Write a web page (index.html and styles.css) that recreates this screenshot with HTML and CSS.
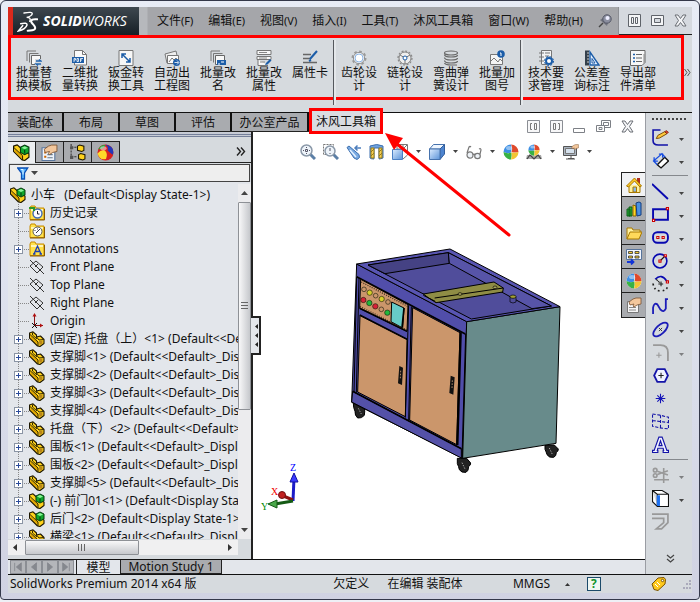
FILE: index.html
```html
<!DOCTYPE html>
<html lang="zh-CN">
<head>
<meta charset="utf-8">
<title>SOLIDWORKS</title>
<link rel="stylesheet" href="styles.css">
</head>
<body>
<svg class="defs" aria-hidden="true">
  <defs>
    <linearGradient id="gb" x1="0" y1="0" x2="1" y2="1"><stop offset="0" stop-color="#dcecff"/><stop offset="1" stop-color="#5a92d8"/></linearGradient>
    <symbol id="part" viewBox="0 0 16 16">
      <path d="M.5 2 4 .8 7.500 4v2l4-1L15 8.500v4L11 15.500 8.500 15 .5 7z" fill="#ffd21c" stroke="#1c1600" stroke-width="1.100" stroke-linejoin="round"/>
      <path d="M1.500 4.500 9 11.500v2.500L1.500 7z" fill="#e0a400"/>
      <path d="M1 3.500 9 11v4M3.500 1.500v2.500L8 8M7.500 6 10 9l4.500-.5" fill="none" stroke="#1c1600" stroke-width=".9"/>
      <path d="m10 10 3.500-.5v3L10.500 14z" fill="#b8861a"/>
    </symbol>
    <symbol id="asm" viewBox="0 0 16 16">
      <path d="M.5 2 4 .8 7.500 4v2l7.500 3v3.500L11 15.500 8.500 15 .5 7z" fill="#ffd21c" stroke="#1c1600" stroke-width="1.100" stroke-linejoin="round"/>
      <path d="M1.500 4.500 9 11.500v2.500L1.500 7z" fill="#e0a400"/>
      <path d="M1 3.500 9 11v4" fill="none" stroke="#1c1600" stroke-width=".9"/>
      <path d="m7 3 4-2 4 2v5l-4 2-4-2z" fill="#10a62c" stroke="#06380f"/>
      <path d="m8 3.500 3-1.500 3 1.500-3 1.500z" fill="#8cf49a"/>
      <path d="M11 5.500V9" stroke="#06380f"/>
    </symbol>
    <symbol id="folder" viewBox="0 0 16 16"><path d="M1 14.500V3l1-2h4l1 2h8v11.500z" fill="#ffe14a" stroke="#c78b00"/><path d="M2 4h12v2H2z" fill="#fff6b8"/><path d="M1 15h14.500V4" fill="none" stroke="#8a5a00"/></symbol>
    <symbol id="plane" viewBox="0 0 16 16"><path d="m1 7 6-5 7 6-6 6zM1 1l14 14M6 8l3-3" fill="none" stroke="#333" stroke-width="1"/></symbol>
    <symbol id="ball" viewBox="0 0 16 16"><circle cx="8" cy="8" r="7.500" fill="#fff"/><path d="M8 .5A7.500 7.500 0 0 0 .5 8Q4 10 8 8.500 9 4 8 .5z" fill="#3c8fe4"/><path d="M8 .5Q10 4 8.500 8q3.500 1 7 0A7.500 7.500 0 0 0 8 .5z" fill="#e04a2c"/><path d="M.5 8A7.500 7.500 0 0 0 8 15.500Q9 12 8.500 8.500 4 10 .5 8z" fill="#38b244"/><path d="M15.500 8A7.500 7.500 0 0 1 8 15.500Q9.500 12 8.500 8.500q3.500 .5 7-.5z" fill="#f3c534"/><ellipse cx="6" cy="4" rx="3" ry="2" fill="#fff" opacity=".45"/></symbol>
    <symbol id="hand" viewBox="0 0 16 16"><path d="M3 5 7 2l3-1h5v6l-4 1-3 2-1-1 1-2-4 1z" fill="#f3c79c" stroke="#7a5230" stroke-width=".8"/></symbol>
    <symbol id="pages" viewBox="0 0 16 16"><path d="M1 11V1h9M3.500 12.500V3.500h9" fill="none" stroke="#777"/><path d="M5.500 5.500h9v9h-9z" fill="#f8f8f8" stroke="#666"/></symbol>
    <symbol id="close" viewBox="0 0 13 13"><path d="M1 1h3l2.500 3.500L9 1h3L8.500 6.500 12 12H9L6.500 8.500 4 12H1l3.500-5.500z" fill="#f4f5f7" stroke="#6a6e75"/></symbol>
    <symbol id="tri" viewBox="0 0 7 4"><path d="M1 0h5L3.500 3z" fill="#444"/></symbol>
  </defs>
</svg>
<div class="window">
  <header class="titlebar">
    <div class="brand">
      <svg class="ds" viewBox="0 0 63 63" aria-hidden="true"><g fill="none" stroke="#fff" stroke-linecap="round"><path d="M21 6q25-5 25 2-2 8-17 11 15 0 9 12" stroke-width="4"/><path d="M11 38q20-4 19 4-4 13-26 18l13-16" stroke-width="4.500"/><path d="M61 25q-16-2-19 5 0 4 9 13 6 8 2 12-5 4-21 4" stroke-width="6"/></g></svg>
      <span class="word"><b>SOLID</b>WORKS</span>
    </div>
    <nav class="menu">
      <button>文件<span>(F)</span></button>
      <button>编辑<span>(E)</span></button>
      <button>视图<span>(V)</span></button>
      <button>插入<span>(I)</span></button>
      <button>工具<span>(T)</span></button>
      <button>沐风工具箱</button>
      <button>窗口<span>(W)</span></button>
      <button>帮助<span>(H)</span></button>
      <button aria-label="固定"><svg width="14" height="14" viewBox="0 0 14 14"><path d="m1 13 4-4" stroke="#444" stroke-width="1.500"/><path d="m2 6 7 6 1-3-5-5z" fill="#71747f"/><circle cx="9" cy="5" r="4.200" fill="#8b8fa0" stroke="#555866"/><circle cx="9.500" cy="4" r="2" fill="#eef"/></svg></button>
    </nav>
    <div class="winbtns">
      <button aria-label="平铺"><svg width="13" height="13" viewBox="0 0 13 13"><path d="M.5.5h12v12H.5z" fill="#f4f5f7" stroke="#5f636a"/><path d="M3.500 3.500h2v6h-2zM7.500 3.500h2v6h-2z" fill="none" stroke="#5f636a"/></svg></button>
      <button aria-label="最大化"><svg width="13" height="13" viewBox="0 0 13 13"><path d="M.5 1.500h12v10H.5z" fill="#f4f5f7" stroke="#5f636a"/><path d="M3.500 4.500h6v4h-6z" fill="#d5d9df" stroke="#5f636a"/></svg></button>
      <button aria-label="关闭"><svg width="13" height="13"><use href="#close"/></svg></button>
    </div>
  </header>

  <section class="ribbon">
    <div class="tools">
      <button><svg viewBox="0 0 16 16"><use href="#pages"/><path d="M9 9h7v7H9z" fill="#d5d9de"/><path d="M10 11h5l-2-1.500M15 14h-5l2 1.500" stroke="#2467b0" fill="none" stroke-width="1.300"/></svg>批量替换模板</button>
      <button><svg viewBox="0 0 16 16"><path d="M2.500 15V.5h8l4 4V15z" fill="#fafafa" stroke="#777"/><path d="M10.500.5v4h4" fill="none" stroke="#777"/><path d="M0 7h12v6H0z" fill="#1c5da8"/><path d="M2 12V8.500h1.500v1.500H2M5 8.500v3h1.500v-3zM8.500 12V8.500H11M8.500 10H10" fill="none" stroke="#fff" stroke-width=".8"/></svg>二维批量转换</button>
      <button><svg viewBox="0 0 16 16"><path d="M1 .5h14v15H1z" fill="#f7f7f7" stroke="#777"/><path d="m4 4 8 8M4 8V4h4M8 12h4V8" fill="none" stroke="#1c5da8" stroke-width="1.500"/></svg>钣金转换工具</button>
      <button><svg viewBox="0 0 16 16"><path d="m1 4 11-3 2 9-11 3z" fill="#eee" stroke="#777"/><path d="M3.500 5.500h11v8h-11z" fill="#fafafa" stroke="#777"/><path d="m5 12 3-4 2 2 2-2 2 3" fill="none" stroke="#777"/><circle cx="12.500" cy="12.500" r="3.500" fill="#1c5da8"/><path d="M10.500 12.500h4m-1.500-2 2 2-2 2" stroke="#fff" fill="none" stroke-width=".8"/></svg>自动出工程图</button>
      <button><svg viewBox="0 0 16 16"><use href="#pages"/><path d="M7 10h9v5H7z" fill="#1c5da8"/><path d="M8 14h2M11 12h3" stroke="#fff"/></svg>批量改名</button>
      <button><svg viewBox="0 0 16 16"><path d="M1 .5h14v4H1zM1 6.500h14v3H1zM2 9.500v6h10" fill="#f7f7f7" stroke="#777"/><path d="M3 2.500h8M3 8h8M4 12h5" stroke="#888"/><path d="m9 15 1-2 4-4 1.500 1.500-4 4z" fill="#1c5da8"/></svg>批量改属性</button>
      <button><svg viewBox="0 0 16 16"><path d="M1 4.500h8M1 8.500h7M1 12.500h14" stroke="#666" stroke-width="1.300"/><path d="m8 9 7-8M7 11l2-1" stroke="#1c5da8" stroke-width="2"/></svg>属性卡</button>
      <span class="sep"></span>
      <button><svg viewBox="0 0 16 16"><circle cx="8" cy="8" r="6.600" fill="none" stroke="#999" stroke-width="1.800" stroke-dasharray="2.600 2.580"/><circle cx="8" cy="8" r="5.600" fill="#f6f9ff" stroke="#888" stroke-width=".9"/><circle cx="8" cy="8" r="4" fill="#fff" stroke="#8bb4e4"/></svg>齿轮设计</button>
      <button><svg viewBox="0 0 16 16"><circle cx="8" cy="8" r="7" fill="none" stroke="#888" stroke-width="1.200" stroke-dasharray="2 1.660"/><circle cx="8" cy="8" r="6" fill="#eee" stroke="#777" stroke-width=".9"/><path d="M8 8v6M8 8 3 5m5 3 5-3" stroke="#777" fill="none"/><circle cx="8" cy="8" r="2" fill="#fff" stroke="#1c5da8"/></svg>链轮设计</button>
      <button><svg viewBox="0 0 16 16"><g fill="none" stroke="#666" stroke-width="1.200"><ellipse cx="8" cy="3" rx="6.500" ry="2"/><path d="M1.500 4.500q0 2.500 6.500 2.500t6.500-2M1.500 7.500Q1.500 10 8 10t6.500-2M1.500 10.500Q1.500 13 8 13t6.500-2M1.500 13q1 2 6.500 2h6"/></g></svg>弯曲弹簧设计</button>
      <button><svg viewBox="0 0 16 16"><path d="M1.500 4.500h12v10h-12z" fill="#f4f4f4" stroke="#777"/><path d="m2 11 3-3 4 4 2-3 2 2" fill="none" stroke="#777"/><circle cx="12" cy="4" r="3.800" fill="#1c5da8"/><path d="M11 3h1v3" stroke="#fff" fill="none"/></svg>批量加图号</button>
      <span class="sep"></span>
      <button><svg viewBox="0 0 16 16"><path d="M3.500 14.500V.5h10v9M4 14.500h5" fill="#f4f4f4" stroke="#777"/><path d="M1 3h5M1 7h5M1 11h5M7 3h5M7 6h4" stroke="#777"/><circle cx="11" cy="11" r="3" fill="#fff" stroke="#1c5da8" stroke-width="2"/><circle cx="11" cy="11" r="4.500" fill="none" stroke="#1c5da8" stroke-dasharray="2 1.530"/></svg>技术要求管理</button>
      <button><svg viewBox="0 0 16 16"><path d="M1 .5h4v15H1z" fill="#34404c"/><path d="M3 3h2M3 6h2M3 9h2M3 12h2" stroke="#ccc"/><path d="M6 2v13h9z" fill="#e6f0ff" stroke="#1c5da8" stroke-width="1.400"/><path d="M8 8.500V13h3z" fill="#fff" stroke="#1c5da8"/></svg>公差查询标注</button>
      <button><svg viewBox="0 0 16 16"><path d="M3 .5h12v12l-3 3H.5V.5z" fill="#f7f7f7" stroke="#666"/><path d="M3 4.500h2M3 8h2M3 11.500h2" stroke="#1c5da8" stroke-width="1.500"/><path d="M6 4.500h6M6 8h6M6 11.500h6" stroke="#666"/><path d="M14 4v9" stroke="#888"/></svg>导出部件清单</button>
    </div>
    <button class="more" aria-label="更多工具"><svg width="7" height="9" viewBox="0 0 7 9"><path d="m.5 1 2.500 3.500L.5 8M3.500 1 6 4.500 3.500 8" fill="none" stroke="#555"/></svg></button>
  </section>

  <main class="workspace">
    <div class="doc">
      <div class="tabrow">
        <nav class="tabs">
          <button>装配体</button><button>布局</button><button>草图</button><button>评估</button><button class="wide">办公室产品</button><button class="active">沐风工具箱</button>
        </nav>
        <div class="docbtns">
          <button aria-label="左侧"><svg width="13" height="13" viewBox="0 0 13 13"><path d="M.5.5h12v12H.5z" fill="#f7f7f8" stroke="#8b8e94"/><path d="M5 3.500H3.500v6H5M7.500 3.500h2v6h-2z" fill="none" stroke="#777"/></svg></button>
          <button aria-label="右侧"><svg width="13" height="13" viewBox="0 0 13 13"><path d="M.5.500h12v12H.5z" fill="#f7f7f8" stroke="#8b8e94"/><path d="M3.500 3.500h2v6h-2zM8 3.500h1.500v6H8" fill="none" stroke="#777"/></svg></button>
          <button aria-label="最小化"><svg width="13" height="13" viewBox="0 0 13 13"><path d="M.5 8.500h11v4H.5z" fill="#fff" stroke="#7d8086"/></svg></button>
          <button aria-label="还原"><svg width="15" height="13" viewBox="0 0 15 13"><path d="M5.500.5h9v7h-9z" fill="#fff" stroke="#7d8086"/><path d="M7.500 2.500h5v3h-5z" fill="none" stroke="#7d8086"/><path d="M.5 5.500h8v6h-8z" fill="#fff" stroke="#7d8086"/><path d="M3 7.500h3v2H3z" fill="none" stroke="#7d8086"/></svg></button>
          <button aria-label="关闭文档"><svg width="13" height="13"><use href="#close"/></svg></button>
        </div>
      </div>

      <div class="split">
        <aside class="panel">
          <div class="ptabs">
            <button class="on" aria-label="设计树"><svg width="17" height="17"><use href="#asm"/></svg></button>
            <button aria-label="属性"><svg width="17" height="17" viewBox="0 0 16 16"><path d="M1 3.500h12v12H1z" fill="#eef3fb" stroke="#57749c"/><path d="M3 8h2M3 12h2" stroke="#c60" stroke-width="2"/><path d="M6 10h5M6 13h5" stroke="#678"/><use href="#hand"/></svg></button>
            <button aria-label="配置"><svg width="17" height="17" viewBox="0 0 16 16"><path d="M2 0v15M2 3h5M2 12h5" stroke="#333" stroke-dasharray="2 1" fill="none"/><path d="M1 2h3v3H1zM1 11h3v3H1z" fill="#555"/><path d="m8 2 2-1 4 1v4l-2 1-4-1zM9 10l2-1 4 1v4l-2 1-4-1z" fill="#ffd21c" stroke="#1c1600"/></svg></button>
            <button aria-label="外观"><svg width="17" height="17" viewBox="0 0 16 16"><circle cx="8" cy="8" r="7.500" fill="#d82020"/><path d="M.5 9q3-4 7-3 3 3 1 8-6 2-8-5z" fill="#ffd928"/><path d="M8 .5Q11 3 10 6q3 3 5 4 2-8-7-9.500z" fill="#2436b8"/><path d="M1 5q3-5 7-4-1 4-7 4z" fill="#2aa33a"/><ellipse cx="6" cy="4" rx="3" ry="2" fill="#fff" opacity=".5"/></svg></button>
            <button class="expand" aria-label="展开"><svg width="10" height="9" viewBox="0 0 10 9"><path d="m1 .5 3.500 4L1 8.500m4-8 3.500 4L5 8.500" fill="none" stroke="#222" stroke-width="1.400"/></svg></button>
          </div>
          <label class="filter">
            <svg width="22" height="13" viewBox="0 0 22 13"><path d="M.7 1h10L7.500 6v6h-3V6z" fill="#58b6ff" stroke="#0b4fb4" stroke-width="1.300"/><path d="M4 2.500h2v5" stroke="#e6f6ff" fill="none"/><path d="M14 4h7l-3.500 4z" fill="#444"/></svg>
            <input type="text" aria-label="筛选">
          </label>
          <div class="treebox">
            <ul class="tree">
              <li class="root"><svg><use href="#asm"/></svg>小车   (Default&lt;Display State-1&gt;)</li>
              <li><i class="node"><button aria-label="展开"></button></i><svg viewBox="0 0 16 16"><use href="#folder"/><circle cx="8.500" cy="8.500" r="4.500" fill="#fff" stroke="#3f6ab8" stroke-width="1.400"/><path d="M8.500 6v3h2" stroke="#223" fill="none"/><path d="M0 3h5v3" stroke="#2c9a2c" stroke-width="2" fill="none"/></svg>历史记录</li>
              <li><i class="node"></i><svg viewBox="0 0 16 16"><use href="#folder"/><circle cx="8.500" cy="8.500" r="4.500" fill="#fff" stroke="#555"/><path d="m7 10 4-4M6 7v1M8 6h1" stroke="#334"/></svg>Sensors</li>
              <li><i class="node"><button aria-label="展开"></button></i><svg viewBox="0 0 16 16"><use href="#folder"/><path d="m5 13 3.500-8 3.500 8M6.500 10.500h4M4 13h2.500M10.500 13H13" stroke="#1b3fb4" stroke-width="1.300" fill="none"/></svg>Annotations</li>
              <li><i class="node"></i><svg><use href="#plane"/></svg>Front Plane</li>
              <li><i class="node"></i><svg><use href="#plane"/></svg>Top Plane</li>
              <li><i class="node"></i><svg><use href="#plane"/></svg>Right Plane</li>
              <li><i class="node"></i><svg viewBox="0 0 16 16"><path d="M5.500 13V2M5 12.500h9" stroke="#8a1414"/><path d="M3.500 3.500h4L5.500 0zM11 10.500v4l3-2z" fill="#b01010"/><path d="m3 10 5 5m0-5-5 5" stroke="#111"/></svg>Origin</li>
              <li><i class="node"><button aria-label="展开"></button></i><svg><use href="#part"/></svg>(固定) 托盘（上）&lt;1&gt; (Default&lt;&lt;Default&gt;)</li>
              <li><i class="node"><button aria-label="展开"></button></i><svg><use href="#part"/></svg>支撑脚&lt;1&gt; (Default&lt;&lt;Default&gt;_Display State 1&gt;)</li>
              <li><i class="node"><button aria-label="展开"></button></i><svg><use href="#part"/></svg>支撑脚&lt;2&gt; (Default&lt;&lt;Default&gt;_Display State 1&gt;)</li>
              <li><i class="node"><button aria-label="展开"></button></i><svg><use href="#part"/></svg>支撑脚&lt;3&gt; (Default&lt;&lt;Default&gt;_Display State 1&gt;)</li>
              <li><i class="node"><button aria-label="展开"></button></i><svg><use href="#part"/></svg>支撑脚&lt;4&gt; (Default&lt;&lt;Default&gt;_Display State 1&gt;)</li>
              <li><i class="node"><button aria-label="展开"></button></i><svg><use href="#part"/></svg>托盘（下）&lt;2&gt; (Default&lt;&lt;Default&gt;)</li>
              <li><i class="node"><button aria-label="展开"></button></i><svg><use href="#part"/></svg>围板&lt;1&gt; (Default&lt;&lt;Default&gt;_Display State 1&gt;)</li>
              <li><i class="node"><button aria-label="展开"></button></i><svg><use href="#part"/></svg>围板&lt;2&gt; (Default&lt;&lt;Default&gt;_Display State 1&gt;)</li>
              <li><i class="node"><button aria-label="展开"></button></i><svg><use href="#part"/></svg>支撑脚&lt;5&gt; (Default&lt;&lt;Default&gt;_Display State 1&gt;)</li>
              <li><i class="node"><button aria-label="展开"></button></i><svg><use href="#asm"/></svg>(-) 前门01&lt;1&gt; (Default&lt;Display State-1&gt;)</li>
              <li><i class="node"><button aria-label="展开"></button></i><svg><use href="#asm"/></svg>后门&lt;2&gt; (Default&lt;Display State-1&gt;)</li>
              <li><i class="node"><button aria-label="展开"></button></i><svg><use href="#part"/></svg>横梁&lt;1&gt; (Default&lt;&lt;Default&gt;_Display State 1&gt;)</li>
            </ul>
            <div class="vbar">
              <svg width="13" height="18" viewBox="0 0 13 18"><path d="M3 11h7L6.500 7z" fill="#444"/></svg>
              <div class="thumb"></div>
              <svg width="13" height="18" viewBox="0 0 13 18"><path d="M3 7h7l-3.500 4z" fill="#444"/></svg>
            </div>
          </div>
          <div class="hbar">
            <svg width="17" height="15" viewBox="0 0 17 15"><path d="M9 4v7L5 7.500z" fill="#333"/></svg>
            <div class="thumb"></div>
            <svg width="17" height="15" viewBox="0 0 17 15"><path d="M7 4v7l4-3.500z" fill="#333"/></svg>
          </div>
          <button class="handle" aria-label="折叠面板"><svg width="6" height="32" viewBox="0 0 6 32"><path d="M5 4v5L2 6.500zM5 13v5l-3-2.500zM5 22v5l-3-2.500z" fill="#222"/></svg></button>
        </aside>

        <section class="view">
          <div class="hud">
            <button aria-label="整屏显示"><svg viewBox="0 0 16 16"><path d="m10 10 5 5" stroke="#5b7fa6" stroke-width="3"/><circle cx="6.500" cy="6.500" r="5.500" fill="#eef4fa" stroke="#8a98a8" stroke-width="1.500"/><path d="M6.500 3v1M6.500 9v1M3 6.500h1M9 6.500h1M5.500 5.500h2v2h-2z" stroke="#556" fill="none"/></svg></button>
            <button aria-label="局部放大"><svg viewBox="0 0 16 16"><path d="m10 10 5 5" stroke="#5b7fa6" stroke-width="3"/><path d="M.5.5h10v10H.5z" fill="none" stroke="#777" stroke-dasharray="2 1"/><circle cx="7" cy="7" r="5" fill="#eef4fa" stroke="#8a98a8" stroke-width="1.500"/><path d="M7 4v3M7 9v1" stroke="#556"/></svg></button>
            <button aria-label="上一视图"><svg viewBox="0 0 16 16"><path d="M1 3.500 3 2l10 8.500.5 3-2.500 2-3-1.500z" fill="#79aae2" stroke="#3d6fae"/><path d="m4 6 6 7" stroke="#e4f1ff" stroke-width="1.500"/><path d="M9 4h6M11.500 1.500 9 4l2.500 2.500" stroke="#4f7fbd" fill="none" stroke-width="1.500"/></svg></button>
            <button aria-label="剖面视图"><svg viewBox="0 0 16 16"><path d="M1 2q7-3 13 0v12q-3 1-4 1V4H5v11q-3 0-4-1z" fill="#6fa2de" stroke="#3d6fae"/><path d="M2 4h3v10H2zM10 4h3v10h-3z" fill="#f4cf54" stroke="#987b18"/><path d="m2 8 3-3M2 12l3-3M10 8l3-3M10 12l3-3" stroke="#987b18"/></svg></button>
            <button aria-label="视图定向"><svg viewBox="0 0 16 16"><path d="M5 5V.5h10.500V11L11 15M5 5h6V.5M11 5l4-4" fill="none" stroke="#777"/><path d="M.5 5.500h10v10H.5z" fill="url(#gb)" stroke="#4b7fc4"/></svg></button>
            <svg class="dd"><use href="#tri"/></svg>
            <button aria-label="显示样式"><svg viewBox="0 0 16 16"><path d="m.5 5 4-4.500h11L11 5z" fill="#eef6ff" stroke="#4672ad"/><path d="M11 5 15.500.5V10L11 15.500z" fill="#4d84cf" stroke="#345f9c"/><path d="M.5 5h10.500v10.500H.5z" fill="url(#gb)" stroke="#4672ad"/></svg></button>
            <svg class="dd"><use href="#tri"/></svg>
            <button aria-label="隐藏显示"><svg viewBox="0 0 16 16"><g fill="#eef3f8" stroke="#777" stroke-width="1.200"><ellipse cx="4" cy="11" rx="3" ry="3.200"/><ellipse cx="11.500" cy="12" rx="2.800" ry="2.600"/><path d="M7 11q1-2 2 0M1 9l2-6q1-1 2 0M14 10l1-4q0-2-2-1" fill="none"/></g></svg></button>
            <svg class="dd"><use href="#tri"/></svg>
            <button aria-label="编辑外观"><svg><use href="#ball"/></svg></button>
            <button aria-label="应用布景"><svg viewBox="0 0 16 16"><path d="M1 11h14l1 4H0z" fill="#aaa"/><path d="m1 15 3-4 4 4 4-4 3 4" stroke="#444" fill="none" stroke-width="1.200"/><use href="#ball" x="2" width="12" height="12"/></svg></button>
            <svg class="dd"><use href="#tri"/></svg>
            <button aria-label="视图设置"><svg viewBox="0 0 16 16"><path d="M.5 2.500h13v9H.5z" fill="#aab4bf" stroke="#555"/><path d="M2.500 4.500h9v5h-9z" fill="#d6e2ee" stroke="#777"/><path d="M5 14.500h6M8 12v3M3 15h9" stroke="#555"/><use href="#hand" x="6" y="0" width="11" height="9"/></svg></button>
            <svg class="dd"><use href="#tri"/></svg>
          </div>

          <svg class="model" viewBox="0 0 690 720" role="img" aria-label="小车模型">
            <g stroke="#000" stroke-width="3" stroke-linejoin="round">
              <g fill="#222"><path d="M40 488h24l8 14q4 10 1 24-8 10-20 8-9-8-8-20l-4-12z"/><path d="M352 655h28l12 14q0 8-6 10 0 14-8 18-14 2-20-8-2-10-6-18z"/><path d="M615 615h28l12 12q0 8-6 10 0 12-8 15-14 2-20-8-2-8-6-16z"/></g>
              <path d="M50 72 380 245 368 655 35 487z" fill="#514eaa"/>
              <path d="M380 245 660 200 648 610 368 655z" fill="#688b8b"/>
              <path d="M50 72 330 27 660 200 380 245z" fill="#5855b2"/>
              <path d="M84 75 325 38 634 198 394 237z" fill="#504d9b"/>
              <path d="M84 75 325 38 328 70 135 101z" fill="#454284"/>
              <path d="M325 38 634 198 576 206 328 70z" fill="#5754a8"/>
              <path d="M50 110 376 282" fill="none" stroke-width="5"/>
              <path d="M62 118 204 194 201 274 59 205z" fill="#cb966b"/>
              <path d="M59 205 201 274M59 225 201 298" fill="none" stroke-width="5"/>
              <path d="M60 227 201 299 196 530 53 456z" fill="#cb966b"/>
              <path d="M218 203 360 278 350 614 209 540z" fill="#cb966b"/>
              <path d="M206 196 196 533M214 200 206 540" fill="none"/>
              <path d="M362 277 352 616" stroke-width="7"/>
              <path d="M377 282 366 650M50 112 42 458M57 114 49 458" fill="none"/>
              <path d="M38 454 364 626 364 654 35 486z" fill="#5451a8"/>
              <path d="M38 454 364 626" fill="none" stroke-width="5"/>
              <path d="M155 186 192 204 188 264 153 245z" fill="#67cbc8"/>
              <path d="M192 204 186 264" stroke-width="5"/>
              <path d="m250 162 212-36 28 18-2 12-200 32-22-14z" fill="#8f8d45"/>
              <path d="m284 174 206-30M250 166l36 18" fill="none"/>
              <ellipse cx="360" cy="162" rx="6" ry="4" fill="#aaa75c" stroke-width="2"/><ellipse cx="465" cy="142" rx="6" ry="4" fill="#aaa75c" stroke-width="2"/>
              <path d="M510 170v16q9 6 18 0v-16" fill="#504d9b" stroke-width="2"/>
              <ellipse cx="519" cy="170" rx="9" ry="5" fill="#a3a035" stroke-width="2"/>
            </g>
            <g stroke="#221" stroke-width="2">
              <g fill="#cb966b"><circle cx="72" cy="148" r="7"/><circle cx="107" cy="167" r="7"/><circle cx="144" cy="186" r="7"/><circle cx="124" cy="208" r="7"/></g>
              <g fill="#d4cf28"><circle cx="89" cy="158" r="8"/><circle cx="125" cy="177" r="8"/></g>
              <g fill="#d82038"><circle cx="70" cy="180" r="8"/><circle cx="106" cy="199" r="8"/></g>
              <g fill="#20b83c"><circle cx="88" cy="189" r="8"/><circle cx="142" cy="218" r="8"/></g>
            </g>
            <path d="M64 126 203 199M60 200 200 270" stroke="#3a2b1e" stroke-width="4" stroke-dasharray="3 4"/>
            <path d="m178 378 11 5-3 52-12-5zM332 407l12 5-4 52-12-5z" fill="#111"/>
            <path d="m182 392-1 26M337 421l-1 25" stroke="#a98565" stroke-width="3" stroke-dasharray="5 4"/>
            <path d="m55 505 9 17M366 668l9 19M628 624l9 19" stroke="#aaa" stroke-width="3" stroke-dasharray="4 4"/>
          </svg>

          <svg class="triad" width="40" height="52" viewBox="0 0 40 52" role="img" aria-label="坐标轴">
            <path d="m31 39 1-23" stroke="#1c1cc8" stroke-width="3"/><path d="m28 20 4-9 4 9z" fill="#3a3aff" stroke="#1010a0"/>
            <path d="m31 38-12-5" stroke="#8e1010" stroke-width="3"/><circle cx="20" cy="33" r="3.500" fill="#c02020" stroke="#701010"/>
            <path d="m31 39-18 3" stroke="#145a14" stroke-width="3"/><path d="m6 42 9-4v8z" fill="#4aa84a" stroke="#145a14"/>
            <text x="28" y="9" fill="#00f">Z</text><text x="9" y="33" fill="#e00">X</text><text x="-1" y="48" fill="#080">Y</text>
          </svg>

          <nav class="taskpane">
            <button class="on" aria-label="资源"><svg viewBox="0 0 16 16"><path d="M11 1h3v6h-3z" fill="#b03020"/><path d="M3 8v7.500h11V8" fill="#fff1a0" stroke="#a87800"/><path d="m.5 9 8-8 7 8-1.500 1-5.500-6-6 6z" fill="#ffc824" stroke="#a87800"/><path d="M7 10h3.500v5H7z" fill="#8db8e8" stroke="#a87800"/></svg></button>
            <button aria-label="设计库"><svg viewBox="0 0 16 16"><path d="M1 8h3v7H1zM3 6h3v9H3z" fill="#28b038" stroke="#0c5c18"/><path d="m7 4 3 1v10H7z" fill="#ffd428" stroke="#8a6800"/><path d="m10 2 3-1 2 1v12l-4 1z" fill="#4a90e0" stroke="#123c80"/></svg></button>
            <button aria-label="文件探索器"><svg viewBox="0 0 16 16"><path d="M1 14V3h5l1 2h7v3" fill="#fff1a0" stroke="#a87800"/><path d="m1 14 3-7h12l-3 7z" fill="#ffd95a" stroke="#a87800"/></svg></button>
            <button aria-label="视图调色板"><svg viewBox="0 0 16 16"><path d="M.5.500h15v10H.5z" fill="#f2f6ff" stroke="#57749c"/><path d="M2.500 2.500h4v2h-4zM9 2.500h4v2H9zM2.500 7h4v2h-4zM9 7h4v2H9z" fill="#f3ca32" stroke="#333" stroke-width=".8"/><path d="M1 13h6M5 10.500 7.500 13 5 15.500" stroke="#1234d8" stroke-width="1.800" fill="none"/></svg></button>
            <button aria-label="外观布景"><svg><use href="#ball"/></svg></button>
            <button aria-label="自定义属性"><svg viewBox="0 0 16 16"><path d="M1.500 4.500h11v11h-11z" fill="#f5f5f5" stroke="#777"/><path d="M3 10.500h7M3 13h7" stroke="#888"/><use href="#hand"/></svg></button>
          </nav>

          <svg class="callout" width="128" height="106" viewBox="0 0 128 106" aria-hidden="true"><path d="M12 11 124 102" stroke="#f00" stroke-width="3" stroke-linecap="round"/><path d="m0 0 18 5-9 12z" fill="#f00"/></svg>
        </section>
      </div>

      <footer class="modeltabs">
        <div class="player">
          <button aria-label="首"><svg viewBox="0 0 12 12"><path d="M2 1v10M10 1v10L4 6z"/></svg></button>
          <button aria-label="前"><svg viewBox="0 0 12 12"><path d="M9 1v10L3 6z"/></svg></button>
          <button aria-label="后"><svg viewBox="0 0 12 12"><path d="M3 1v10l6-5z"/></svg></button>
          <button aria-label="末"><svg viewBox="0 0 12 12"><path d="M10 1v10M2 1v10l6-5z"/></svg></button>
        </div>
        <button class="mt on">模型</button><button class="mt">Motion Study 1</button>
      </footer>
    </div>

    <aside class="sketch">
      <div class="grip"></div>
      <div class="row"><button aria-label="草图绘制"><svg viewBox="0 0 16 16"><path d="M8 1H1v10q0 4 5 4h9" fill="none" stroke="#1212a8" stroke-width="1.500"/><path d="m4 9 1.500-3L12 2.500l2 2L7 8.500z" fill="#ffc93c" stroke="#7a4a00" stroke-width=".9"/><path d="m12 2.500 1.500-1 2 1.500-1.500 1.500z" fill="#d04030" stroke="#7a1a00" stroke-width=".6"/></svg></button><svg class="dd"><use href="#tri"/></svg></div>
      <div class="row"><button aria-label="智能尺寸"><svg viewBox="0 0 16 16"><path d="m5 12 7-7 3.500 3.500L8.500 15z" fill="#fff" stroke="#111" stroke-width="1.300"/><path d="m2 8 7-6M2 5v3.500h3.500M6.500 2H10v3.500M1 8l4 4M9 1l3.500 4" fill="none" stroke="#164ce0" stroke-width="1.200"/></svg></button><svg class="dd"><use href="#tri"/></svg></div>
      <hr>
      <div class="row"><button aria-label="直线"><svg viewBox="0 0 16 16"><path d="m0 1 15 14" stroke="#0808b0" stroke-width="1.800"/></svg></button><svg class="dd"><use href="#tri"/></svg></div>
      <div class="row"><button aria-label="矩形"><svg viewBox="0 0 16 16"><path d="M1 3h14v10H1z" fill="none" stroke="#0808b0" stroke-width="1.800"/><path d="M13.500 1.500h2v2h-2zM.5 12.500h2v2h-2z" fill="#fff" stroke="#c00"/></svg></button><svg class="dd"><use href="#tri"/></svg></div>
      <div class="row"><button aria-label="槽口"><svg viewBox="0 0 16 16"><rect x="1" y="3" width="14" height="10" rx="4" fill="none" stroke="#0808b0" stroke-width="1.800"/><path d="M4.500 7h2v2h-2zM9.500 7h2v2h-2z" fill="#fff" stroke="#c00"/></svg></button><svg class="dd"><use href="#tri"/></svg></div>
      <div class="row"><button aria-label="圆"><svg viewBox="0 0 16 16"><circle cx="7.500" cy="8.500" r="6.500" fill="none" stroke="#0808b0" stroke-width="1.500"/><path d="m8 8 4-4" stroke="#111"/><path d="M6.500 7.500h2v2h-2zM11.500 2.500h2v2h-2z" fill="#fff" stroke="#c00"/></svg></button><svg class="dd"><use href="#tri"/></svg></div>
      <div class="row"><button aria-label="圆弧"><svg viewBox="0 0 16 16"><path d="M3 4q6-6 11 2" fill="none" stroke="#0808b0" stroke-width="1.500"/><path d="m4 4 4 4M6 8.500h5M8.500 6v5" stroke="#222" stroke-dasharray="2 .5"/><path d="M1 8q1 7 7 7t7-5" fill="none" stroke="#222" stroke-width="1.600" stroke-dasharray="1.600 2.600"/><path d="M13.500 5.500h2v2h-2z" fill="#fff" stroke="#c00"/></svg></button><svg class="dd"><use href="#tri"/></svg></div>
      <div class="row"><button aria-label="样条曲线"><svg viewBox="0 0 16 16"><path d="M1 15V9q1-5 4-3l3 5q3 3 5-1V1h2" fill="none" stroke="#1c1cb8" stroke-width="1.700"/></svg></button><svg class="dd"><use href="#tri"/></svg></div>
      <div class="row"><button aria-label="椭圆"><svg viewBox="0 0 16 16"><ellipse cx="8" cy="8" rx="8.500" ry="4" transform="rotate(-43 8 8)" fill="none" stroke="#1c1cb8" stroke-width="1.700"/><path d="m6.500 6.500 3 3m0-3-3 3" stroke="#333" stroke-width=".9"/></svg></button><svg class="dd"><use href="#tri"/></svg></div>
      <div class="row dim"><button aria-label="圆角"><svg viewBox="0 0 16 16"><path d="M1 1h7q7 0 7 7v8" fill="none" stroke="#999" stroke-width="1.700"/><path d="M6.500 8v5M4 10.500h5" stroke="#999"/></svg></button><svg class="dd"><use href="#tri"/></svg></div>
      <div class="row"><button aria-label="多边形"><svg viewBox="0 0 16 16"><path d="M5 2h7l3 6-3 6H5L2 8z" fill="#f0f2ff" stroke="#1414a8" stroke-width="1.700"/><path d="M8.500 5.500v5M6 8h5" stroke="#222"/></svg></button></div>
      <div class="row"><button aria-label="点"><svg viewBox="0 0 16 16"><path d="M8 3.500v9M3.500 8h9m-7.500-3 6 6m0-6-6 6" stroke="#1414b8"/></svg></button></div>
      <div class="row"><button aria-label="基准面"><svg viewBox="0 0 16 16"><path d="m.5 1 7 1 8 2v11l-8-1-7-1.500zM.5 7l7 1 8 1M8 2v12" fill="none" stroke="#1414a8" stroke-dasharray="3 1.500"/></svg></button></div>
      <div class="row"><button aria-label="文字"><svg viewBox="0 0 16 16"><path d="M.5 15.500v-2H2L6.500 1h3L14 13.500h1.500v2h-5v-2h.5l-.5-2h-5l-.5 2h.5v2zM6.500 9h3L8 4.500z" fill="#f2f3ff" fill-rule="evenodd" stroke="#1414a8" stroke-width="1.100"/></svg></button></div>
      <hr>
      <div class="row dim"><button aria-label="剪裁"><svg viewBox="0 0 16 16"><g fill="none" stroke="#999" stroke-width="1.500"><circle cx="3" cy="3" r="1.700"/><circle cx="3" cy="8" r="1.700"/><path d="m5 4 10 3.500M5 7l10-3.500M2 12h14M11 1v14"/></g></svg></button><svg class="dd"><use href="#tri"/></svg></div>
      <div class="row"><button aria-label="转换实体"><svg viewBox="0 0 16 16"><path d="M.5.500h9l6 3.500v11.500H5L.5 11zM5 15V4L.5.500M5 4h10.500" fill="#fff" stroke="#111"/><path d="M6 5v10" stroke="#1c70f0" stroke-width="3"/></svg></button><svg class="dd"><use href="#tri"/></svg></div>
      <div class="row dim"><button aria-label="等距实体"><svg viewBox="0 0 16 16"><path d="M0 1h15v8l-6 6H4l7-6V5H0" fill="none" stroke="#999" stroke-width="1.600"/></svg></button></div>
      <button class="down" aria-label="更多"><svg width="9" height="9" viewBox="0 0 9 9"><path d="m1 1 3.500 3L8 1M1 5l3.500 3L8 5" fill="none" stroke="#444" stroke-width="1.200"/></svg></button>
    </aside>
  </main>

  <footer class="status">
    <span class="product">SolidWorks Premium 2014 x64 版</span>
    <span class="defn">欠定义</span>
    <span class="editing">在编辑 装配体</span>
    <button class="units">MMGS <svg width="7" height="4" viewBox="0 0 7 4"><path d="M1 4h5L3.500 1z" fill="#333"/></svg></button>
    <button class="help" aria-label="帮助">?</button>
    <button class="tag" aria-label="标签"><svg width="15" height="14" viewBox="0 0 15 14"><path d="m1 7 6-6 6-.5 1.500 2L14 7l-7 6.500-4-1z" fill="#ffc91c" stroke="#7a5200"/><circle cx="11.500" cy="3.500" r="1.200" fill="#fff" stroke="#7a5200"/><path d="m4 7 3 3M6 5l3 3" stroke="#fff"/></svg></button>
    <svg class="grippy" width="9" height="9" viewBox="0 0 9 9"><path d="M7 1h2M4 4h2M7 4h2M1 8h2M4 8h2M7 8h2" stroke="#aab" stroke-width="2"/></svg>
  </footer>
</div>
</body>
</html>
```
FILE: styles.css
```css
* { box-sizing: border-box; }
body {
  margin: 0;
  height: 100vh;
  padding-bottom: 2px;
  background: #eef0f6;
  font: 12px/18px "Noto Sans", "Noto Sans CJK SC", sans-serif;
  color: #111;
  overflow: hidden;
}
button {
  margin: 0;
  padding: 0;
  border: 0;
  background: none;
  font: inherit;
  color: inherit;
}
svg { display: block; flex: none; }
.defs { position: absolute; width: 0; height: 0; }

.window {
  display: flex;
  flex-direction: column;
  height: 100%;
  padding: 6px 7px;
  border: 1px solid #34384a;
  border-radius: 6px 6px 4px 4px;
  background: linear-gradient(#e8ecf6, #e0e4f0 40%, #d0d2e2);
}

/* title bar */
.titlebar { display: flex; height: 28px; flex: none; background: #d5d9df; }
.brand {
  display: flex;
  align-items: center;
  width: 131px;
  padding-left: 4px;
  border-left: 5px solid #da291c;
  background: linear-gradient(#3e4850, #171f26);
  color: #fff;
}
.ds { width: 21px; height: 21px; }
.word { margin-left: 5px; font: italic 14px/18px "Open Sans", sans-serif; white-space: nowrap; }
.menu {
  display: flex;
  flex: 1;
  align-items: center;
  justify-content: space-between;
  padding: 0 6px 0 18px;
  background: linear-gradient(90deg, #b6b8bc 8px, #a5a6aa 9px);
  border-right: 1px solid #8d8f94;
  white-space: nowrap;
}
.menu span { font-size: 11px; }
.winbtns { display: flex; align-items: center; gap: 10px; padding: 0 5px 0 9px; border-bottom: 1px solid #222; }

/* ribbon */
.ribbon { display: flex; height: 77px; flex: none; background: #d6dade; }
.tools { display: flex; flex: 1; height: 65px; border: 3px solid #f00; }
.tools button {
  display: flex;
  flex-direction: column;
  align-items: center;
  width: 46px;
  padding: 12px 5px 0;
  line-height: 13px;
}
.tools svg { width: 16px; height: 16px; }
.sep { width: 3px; height: 65px; margin-top: 2px; border-left: 1px solid #55585d; background: #e4e7ea; }
.more { width: 8px; height: 75px; }

/* workspace */
.workspace { display: flex; flex: 1; min-height: 0; border-top: 1px solid #111; }
.doc { display: flex; flex: 1; flex-direction: column; min-width: 0; background: #fff; }
.tabrow { display: flex; flex: none; justify-content: space-between; height: 19px; padding-right: 11px; }
.tabs { display: flex; border-bottom: 1px solid #222; }
.tabs button {
  width: 56px;
  border-right: 2px solid #111;
  background: #a9abaf;
  line-height: 17px;
  white-space: nowrap;
}
.tabs .wide { width: 77px; }
.tabs .active {
  position: relative;
  z-index: 2;
  width: 74px;
  height: 26px;
  margin-top: -5px;
  border: 3px solid #f00;
  background: #d9dce1;
}
.docbtns { position: relative; z-index: 2; display: flex; align-items: flex-start; gap: 10px; padding-top: 7px; }

.split { display: flex; flex: 1; min-height: 0; }

/* feature panel */
.panel {
  position: relative;
  display: flex;
  flex-direction: column;
  width: 245px;
  padding-top: 9px;
  border-right: 2px solid #222;
  background: linear-gradient(#c8ccd6 2px, #75809a 2px, #75809a 3px, #c8ccd6 3px, #c8ccd6 4px, #75809a 4px, #75809a 5px, #d6dade 5px);
}
.ptabs { display: flex; height: 22px; flex: none; border-bottom: 1px solid #222; }
.ptabs button {
  display: grid;
  place-items: center;
  width: 28px;
  border: solid #222;
  border-width: 1px 1px 0 0;
  background: #a9abaf;
}
.ptabs .on { height: 22px; background: #eceef0; }
.ptabs .expand { width: 20px; margin-left: auto; border: 0; background: none; }
.filter {
  display: flex;
  flex: none;
  align-items: center;
  height: 18px;
  margin: 1px 1px 0;
  padding-left: 7px;
  border: 1px solid #444;
  background: #eee;
}
.filter input { flex: 1; min-width: 0; height: 14px; padding: 0 4px; border: 0; outline: 0; background: none; font: inherit; }

.treebox { display: flex; flex: 1; min-height: 0; padding-top: 2px; background: #e3e6eb; }
.tree { flex: 1; min-width: 0; margin: 0; padding: 2px 0 0; overflow: hidden; list-style: none; }
.tree li {
  display: flex;
  align-items: center;
  height: 18px;
  padding-left: 6px;
  white-space: pre;
  background: repeating-linear-gradient(#888 0 1px, transparent 1px 2px) 10px 0 / 1px 100% no-repeat;
}
.tree .root { padding-left: 2px; background: none; }
.tree svg { width: 16px; height: 16px; margin-right: 5px; }
.node {
  display: flex;
  align-items: center;
  width: 15px;
  height: 18px;
  flex: none;
  background: repeating-linear-gradient(90deg, #888 0 1px, transparent 1px 2px) 4px 9px / 11px 1px no-repeat;
}
.node button {
  width: 9px;
  height: 9px;
  border: 1px solid #8a94a4;
  background:
    linear-gradient(#2a4a9a, #2a4a9a) center / 5px 1px no-repeat,
    linear-gradient(#2a4a9a, #2a4a9a) center / 1px 5px no-repeat,
    #fff;
}
.vbar { display: flex; flex-direction: column; width: 13px; background: #ececee; }
.vbar .thumb {
  height: 208px;
  margin-bottom: auto;
  border: 1px solid #8e9196;
  border-radius: 1px;
  background:
    repeating-linear-gradient(#666 0 1px, transparent 1px 3px) center / 7px 9px no-repeat,
    linear-gradient(90deg, #f8f8f9, #c6c8cc);
}
.hbar { display: flex; height: 15px; flex: none; margin: 1px 13px 4px 0; background: #f0f0f1; }
.hbar .thumb {
  width: 114px;
  margin-right: auto;
  border: 1px solid #8e9196;
  border-radius: 1px;
  background:
    repeating-linear-gradient(90deg, #666 0 1px, transparent 1px 3px) center / 9px 7px no-repeat,
    linear-gradient(#f8f8f9, #c6c8cc);
}
.handle {
  position: absolute;
  z-index: 1;
  top: 184px;
  right: -10px;
  width: 10px;
  height: 39px;
  padding-left: 2px;
  border: 2px solid #222;
  border-left: 0;
  background: #e3e6eb;
}

/* graphics area */
.view { position: relative; flex: 1; min-width: 0; background: #fff; }
.hud { display: flex; align-items: center; gap: 7px; padding: 12px 0 0 47px; }
.hud svg { width: 16px; height: 16px; }
.hud .dd, .dd { width: 7px; height: 4px; }
.model { position: absolute; left: 87px; top: 108px; width: 230px; height: 240px; }
.triad { position: absolute; left: 9px; bottom: 45px; overflow: visible; font: 10px/10px "Liberation Serif", serif; }
.taskpane { position: absolute; right: 0; top: 40px; width: 24px; border: 1px solid #222; border-right: 0; }
.taskpane button {
  display: grid;
  place-items: center;
  width: 100%;
  height: 24px;
  border-bottom: 1px solid #222;
  background: #a9abaf;
}
.taskpane button:last-child { border: 0; }
.taskpane .on { background: #f1f2f4; }
.taskpane svg { width: 16px; height: 16px; }
.callout { position: absolute; z-index: 3; left: 132px; top: 1px; }

/* model tabs */
.modeltabs { display: flex; flex: none; height: 15px; border-top: 1px solid #111; background: #e3e6eb; }
.player { display: flex; width: 68px; padding-left: 2px; }
.player button { display: grid; place-items: center; width: 16px; border: 1px solid #8b8e94; background: #b4b6ba; }
.player svg { width: 10px; height: 10px; fill: #85888e; stroke: #85888e; }
.mt { width: 101px; border-right: 1px solid #222; border-bottom: 1px solid #222; background: #a9abaf; line-height: 13px; }
.mt.on { width: 45px; border-left: 1px solid #222; border-bottom: 0; background: #e3e6eb; }

/* sketch toolbar */
.sketch { display: flex; flex-direction: column; width: 47px; padding: 5px 4px 0 6px; border-left: 1px solid #9a9da3; background: #d6dade; }
.grip { height: 3px; flex: none; margin-bottom: 5px; background: repeating-linear-gradient(90deg, #444 0 2px, transparent 2px 4px) 0 0 / 100% 2px no-repeat; }
.row { display: flex; align-items: center; gap: 9px; height: 23px; flex: none; }
.row button svg { width: 17px; height: 17px; }
.row .dd { margin-top: 4px; }
.dim .dd { opacity: .6; }
.sketch hr { width: 100%; height: 8px; flex: none; margin: 0; border: 0; background: linear-gradient(#85888d, #85888d) 0 3px / 100% 1px no-repeat; }
.down { align-self: center; margin-top: 21px; }

/* status bar */
.status {
  display: flex;
  flex: none;
  align-items: center;
  height: 19px;
  padding: 0 1px 0 2px;
  border-top: 1px solid #111;
  background: #d6dade;
  white-space: nowrap;
}
.product { flex: 322 0 0; }
.defn { flex: 54 0 0; }
.editing { flex: 125 0 0; }
.units { display: flex; align-items: center; gap: 14px; margin-right: 16px; }
.help { width: 14px; height: 14px; margin-right: 50px; border: 1px solid #1c4a6a; background: #eef6f2; color: #10942c; font-weight: bold; line-height: 12px; }
.tag { margin-right: 16px; }
```
